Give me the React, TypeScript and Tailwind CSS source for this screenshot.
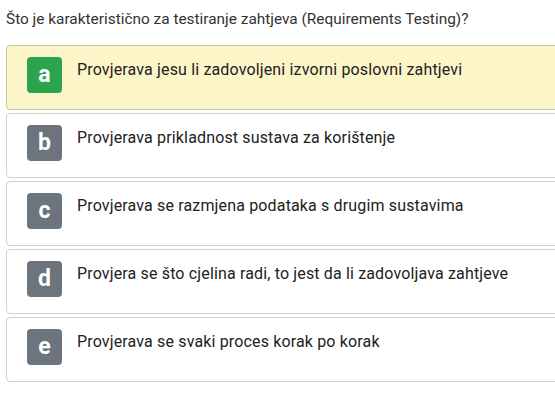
const options = [
  { k: "a", t: "Provjerava jesu li zadovoljeni izvorni poslovni zahtjevi", correct: true },
  { k: "b", t: "Provjerava prikladnost sustava za korištenje" },
  { k: "c", t: "Provjerava se razmjena podataka s drugim sustavima" },
  { k: "d", t: "Provjera se što cjelina radi, to jest da li zadovoljava zahtjeve" },
  { k: "e", t: "Provjerava se svaki proces korak po korak" },
];

export default function App() {
  return (
    <div
      className="w-[555px] h-[411px] overflow-hidden bg-white pl-[6px]"
      style={{ fontFamily: "Roboto, 'Open Sans', sans-serif" }}
    >
      <div className="pt-[7px] text-[15.4px] leading-[24px] text-[#333]">
        Što je karakteristično za testiranje zahtjeva (Requirements Testing)?
      </div>
      <div className="mt-[14px] flex flex-col gap-[3px] w-[620px]">
        {options.map((o) => (
          <div
            key={o.k}
            className={
              "h-[65px] rounded-[4px] border flex items-start pl-[20px] pt-[11px] " +
              (o.correct ? "bg-[#fcf5c8] border-[#c9c4a3]" : "bg-white border-[#cfcfcf]")
            }
          >
            <div
              className={
                "w-[35px] h-[36px] rounded-[4px] flex items-center justify-center text-white font-bold text-[23px] leading-none pb-[2px] " +
                (o.correct ? "bg-[#2ca44e]" : "bg-[#6c757d]")
              }
            >
              {o.k}
            </div>
            <div className="ml-[15px] mt-[1px] text-[16px] tracking-[0.15px] leading-[24px] text-[#222]">{o.t}</div>
          </div>
        ))}
      </div>
    </div>
  );
}
